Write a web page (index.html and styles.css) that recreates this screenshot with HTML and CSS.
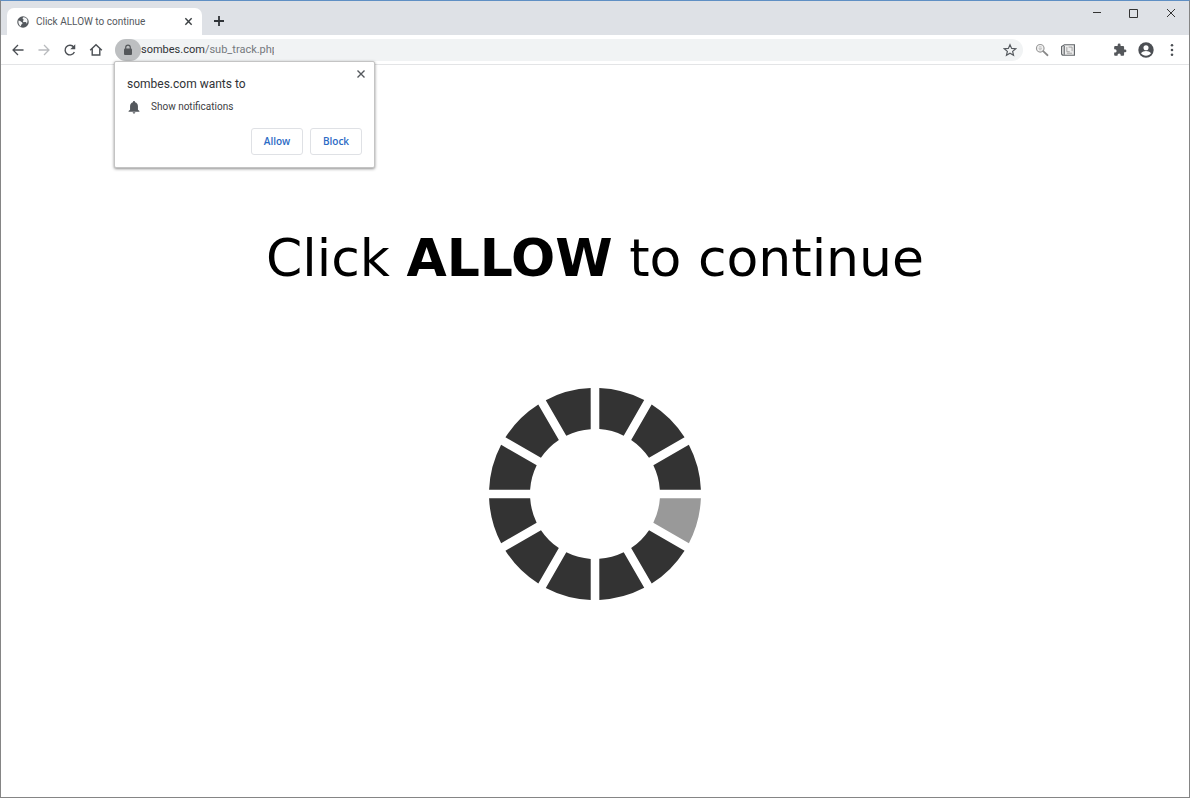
FILE: index.html
```html
<!DOCTYPE html>
<html lang="en">
<head>
<meta charset="utf-8">
<title>Click ALLOW to continue</title>
<link rel="stylesheet" href="styles.css">
</head>
<body>
<div class="window">
  <header class="tab-strip">
    <div class="tab">
      <svg class="globe" viewBox="0 0 24 24" aria-hidden="true"><circle cx="12" cy="12" r="11.5" fill="#54585d"/><path d="M3 9c3 0 4 2 6 3s3 3 1 4-2 3-2 5c-4-2-6-7-5-12zM12 3c-2 2 0 3 1 4s-1 2-1 4 3 1 5 1 2 2 2 4c3-4 3-9-1-12-2-1-4-2-6-1z" fill="#f4f5f6"/></svg>
      <span class="tab-title">Click ALLOW to continue</span>
      <button class="icon-button tab-close" aria-label="Close tab"><svg viewBox="0 0 10 10"><path d="M1.5 1.5l7 7M8.5 1.5l-7 7" stroke="#3c4043" stroke-width="1.6"/></svg></button>
    </div>
    <button class="icon-button new-tab" aria-label="New tab"><svg viewBox="0 0 12 12"><path d="M6 1v10M1 6h10" stroke="#303438" stroke-width="1.8"/></svg></button>
    <div class="window-controls">
      <button class="icon-button" aria-label="Minimize"><svg viewBox="0 0 10 10"><path d="M1 4.500h8" stroke="#333"/></svg></button>
      <button class="icon-button" aria-label="Maximize"><svg viewBox="0 0 10 10"><path d="M.5 1.500h8v8h-8z" fill="none" stroke="#333"/></svg></button>
      <button class="icon-button" aria-label="Close window"><svg viewBox="0 0 10 10"><path d="M1 1l8 8M9 1L1 9" stroke="#333"/></svg></button>
    </div>
  </header>

  <nav class="toolbar">
    <button class="icon-button tool" aria-label="Back"><svg viewBox="0 0 24 24"><path d="M21.5 12H4M12 3.5L3.5 12l8.5 8.500" fill="none" stroke="#4b4f54" stroke-width="2.200"/></svg></button>
    <button class="icon-button tool" aria-label="Forward" disabled><svg viewBox="0 0 24 24"><path d="M2.500 12H20M12 3.500l8.500 8.500-8.500 8.500" fill="none" stroke="#b9bbbe" stroke-width="2.200"/></svg></button>
    <button class="icon-button tool" aria-label="Reload"><svg viewBox="0 0 24 24"><path d="M19.500 15.500A8.300 8.300 0 1 1 18.500 7" fill="none" stroke="#4b4f54" stroke-width="2.400"/><path d="M21 2v8.500h-8.500z" fill="#4b4f54"/></svg></button>
    <button class="icon-button tool" aria-label="Home"><svg viewBox="0 0 24 24"><path d="M2 12.500L12 3l10 9.500M5.500 10v10.500h13V10" fill="none" stroke="#4b4f54" stroke-width="2.400"/></svg></button>
    <div class="omnibox">
      <button class="icon-button site-info" aria-label="View site information"><svg viewBox="0 0 12 12"><path d="M3.700 5V3.400a2.300 2.300 0 0 1 4.600 0V5" fill="none" stroke="#54575a" stroke-width="1.200"/><rect x="2" y="4.500" width="8" height="6.500" rx="1" fill="#54575a"/></svg></button>
      <div class="address" role="textbox" contenteditable="true" spellcheck="false" aria-label="Address bar"><span class="host">sombes.com</span>/sub_track.php</div>
      <button class="icon-button bookmark" aria-label="Bookmark this page"><svg viewBox="0 0 24 24"><path d="M12 2.800l2.800 6.400 7 .6-5.300 4.600 1.600 6.800-6.100-3.600-6.100 3.600 1.600-6.800-5.300-4.600 7-.6z" fill="none" stroke="#55595e" stroke-width="2"/></svg></button>
      <section class="permission" role="dialog" aria-labelledby="permission-title">
        <button class="icon-button dismiss" aria-label="Close"><svg viewBox="0 0 10 10"><path d="M1.500 1.500l7 7M8.500 1.500l-7 7" stroke="#54585d" stroke-width="1.400"/></svg></button>
        <h2 class="permission-title" id="permission-title">sombes.com wants to</h2>
        <p class="permission-item">
          <svg class="bell" viewBox="0 0 16 16" aria-hidden="true"><path d="M8 1c.8 0 1.200.5 1.200 1.200v.5C11.300 3.300 12.500 5 12.500 7v4l1.700 1.500v.8H1.800v-.8L3.500 11V7c0-2 1.200-3.700 3.300-4.300v-.5C6.800 1.500 7.200 1 8 1zM6.500 14h3c0 .9-.6 1.500-1.500 1.500S6.500 14.900 6.500 14z" fill="#54585d"/></svg>
          <span>Show notifications</span>
        </p>
        <div class="actions">
          <button class="action">Allow</button>
          <button class="action">Block</button>
        </div>
      </section>
    </div>
    <div class="extensions">
      <button class="icon-button tool" aria-label="Search extension"><svg viewBox="0 0 24 24"><circle cx="9" cy="9" r="6.500" fill="#f3f3f3" stroke="#999" stroke-width="2"/><path d="M6 9h6M7 6.500h4M7 11.500h4" stroke="#aaa" stroke-width="1.200"/><path d="M14 14l7.500 7" stroke="#888" stroke-width="3" stroke-linecap="round"/></svg></button>
      <button class="icon-button tool" aria-label="News extension"><svg viewBox="0 0 24 24"><path d="M6 3h17v18H4.500Q1 21 1 18V6l5-3z" fill="#eee" stroke="#62666a" stroke-width="2"/><path d="M5.500 5v15" stroke="#62666a" stroke-width="2"/><path d="M10 7v8h5M13 7h6v7M10 17.500h9" fill="none" stroke="#999" stroke-width="1.500"/></svg></button>
      <button class="icon-button tool puzzle" aria-label="Extensions"><svg viewBox="0 0 24 24"><path d="M20.500 11H19V7c0-1.100-.9-2-2-2h-4V3.500a2.500 2.500 0 0 0-5 0V5H4c-1.100 0-2 .9-2 2v3.800h1.500a2.700 2.700 0 0 1 0 5.400H2V20c0 1.100.9 2 2 2h3.800v-1.500a2.700 2.700 0 0 1 5.400 0V22H17c1.100 0 2-.9 2-2v-4h1.500a2.500 2.500 0 0 0 0-5z" fill="#54575b"/></svg></button>
      <button class="icon-button profile" aria-label="Profile"><svg viewBox="0 0 24 24"><circle cx="12" cy="12" r="11.500" fill="#4c4f54"/><circle cx="12" cy="8.500" r="3.800" fill="#fff"/><path d="M4.500 17c1.500-2.500 5-3.500 7.500-3.500s6 1 7.500 3.500c-1.500 2.200-4.500 3.500-7.500 3.500S6 19.200 4.500 17z" fill="#fff"/></svg></button>
      <button class="icon-button tool" aria-label="Menu"><svg viewBox="0 0 24 24"><g fill="#4b4f54"><circle cx="12" cy="4" r="2.200"/><circle cx="12" cy="12" r="2.200"/><circle cx="12" cy="20" r="2.200"/></g></svg></button>
    </div>
  </nav>

  <main class="page">
    <h1 class="prompt">Click <strong>ALLOW</strong> to continue</h1>
    <svg class="spinner" viewBox="-106 -106 212 212" role="img" aria-label="Loading">
      <defs><path id="segment" d="M4.300-105.900A106 106 0 0 1 49.200-93.900L28.700-58.300A65 65 0 0 0 4.300-64.900z"/></defs>
      <g fill="#333">
        <use href="#segment"/>
        <use href="#segment" transform="rotate(30)"/>
        <use href="#segment" transform="rotate(60)"/>
        <use href="#segment" transform="rotate(90)" fill="#999"/>
        <use href="#segment" transform="rotate(120)"/>
        <use href="#segment" transform="rotate(150)"/>
        <use href="#segment" transform="rotate(180)"/>
        <use href="#segment" transform="rotate(210)"/>
        <use href="#segment" transform="rotate(240)"/>
        <use href="#segment" transform="rotate(270)"/>
        <use href="#segment" transform="rotate(300)"/>
        <use href="#segment" transform="rotate(330)"/>
      </g>
    </svg>
  </main>
</div>
</body>
</html>
```

FILE: styles.css
```css
* { box-sizing: border-box; }

body {
  margin: 0;
  background: #fff;
  color: #3c4043;
  font-family: Roboto, "Open Sans", sans-serif;
  font-size: 10px;
}

.window {
  display: flex;
  flex-direction: column;
  min-height: 100vh;
  border: 1px solid #858585;
  border-top-color: #5f8fc4;
}

.icon-button {
  display: flex;
  align-items: center;
  justify-content: center;
  flex: none;
  padding: 0;
  border: 0;
  background: none;
}

.icon-button svg { display: block; width: 100%; height: 100%; }

/* Tabs */
.tab-strip {
  display: flex;
  align-items: flex-start;
  height: 34px;
  padding-left: 6px;
  background: #dee1e6;
}

.tab {
  display: flex;
  align-items: center;
  align-self: flex-end;
  gap: 7px;
  width: 195px;
  height: 27px;
  padding: 0 9px 0 10px;
  border-radius: 7px 7px 0 0;
  background: #fff;
}

.globe { width: 12px; height: 12px; }
.tab-title { flex: 1; white-space: nowrap; color: #54585d; }
.tab-close { width: 9px; height: 9px; }
.new-tab { width: 12px; height: 12px; margin: 14px 0 0 11px; }

.window-controls {
  display: flex;
  gap: 27px;
  margin: 7px 13px 0 auto;
}

.window-controls .icon-button { width: 10px; height: 10px; }

/* Toolbar */
.toolbar {
  display: flex;
  align-items: center;
  gap: 12px;
  height: 30px;
  padding: 0 10px;
  border-bottom: 1px solid #e3e4e6;
}

.tool { width: 14px; height: 14px; }

.omnibox {
  position: relative;
  display: flex;
  align-items: center;
  flex: 1;
  height: 22px;
  border-radius: 11px;
  background: #f1f3f4;
}

.site-info {
  width: 26px;
  height: 22px;
  border-radius: 11px;
  background: #bdbfc1;
}

.site-info svg { width: 12px; height: 12px; }

.address {
  width: 133px;
  overflow: hidden;
  white-space: nowrap;
  color: #75797e;
  font-size: 11px;
  line-height: 20px;
}

.host { color: #303236; }
.bookmark { width: 14px; height: 14px; margin: 0 6px 0 auto; }

.extensions { display: flex; align-items: center; gap: 12px; }
.puzzle { margin-left: 26px; }
.profile { width: 16px; height: 16px; margin: 0 -1px; }

/* Permission prompt */
.permission {
  position: absolute;
  z-index: 1;
  top: 100%;
  left: -1px;
  width: 261px;
  padding: 13px 12px 12px;
  border: 1px solid #c4c4c4;
  border-radius: 2px;
  background: #fff;
  box-shadow: 0 1px 3px rgba(0, 0, 0, .45);
}

.dismiss {
  position: absolute;
  top: 7px;
  right: 8px;
  width: 10px;
  height: 10px;
}

.permission-title {
  margin: 0;
  color: #303236;
  font-size: 12px;
  font-weight: 400;
  line-height: 18px;
}

.permission-item {
  display: flex;
  align-items: center;
  gap: 10px;
  margin: 6px 0 13px;
  line-height: 16px;
}

.bell { width: 14px; height: 14px; }
.actions { display: flex; justify-content: flex-end; gap: 7px; }

.action {
  width: 52px;
  height: 27px;
  padding: 0;
  border: 1px solid #dfe1e5;
  border-radius: 3px;
  background: #fff;
  color: #2b6bc5;
  font: 600 10px "Open Sans", "Noto Sans", sans-serif;
}

/* Page content */
.page {
  display: flex;
  flex: 1;
  flex-direction: column;
  align-items: center;
  gap: 99px;
  padding: 163px 20px;
}

.prompt {
  margin: 0;
  color: #000;
  font: 400 52px/61px "DejaVu Sans", sans-serif;
  text-align: center;
}

.prompt strong { font-weight: 700; }
.spinner { width: 212px; height: 212px; }
```
